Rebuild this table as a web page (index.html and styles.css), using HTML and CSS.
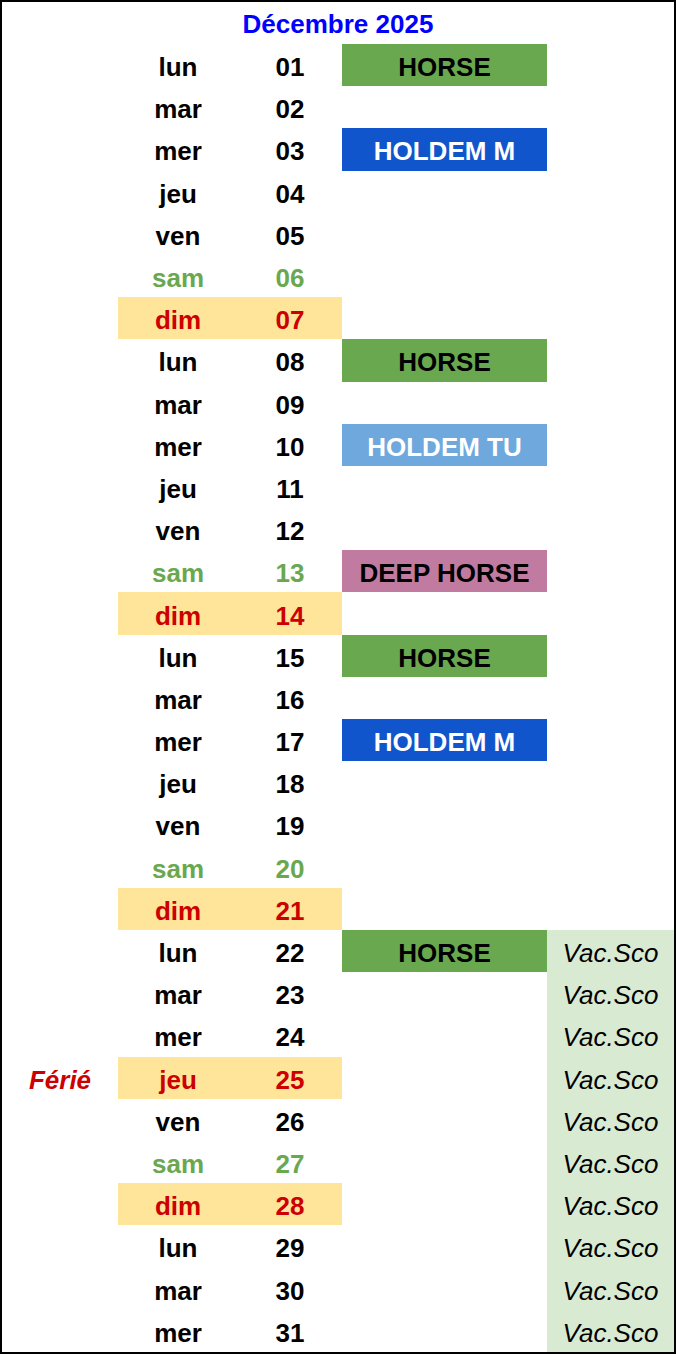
FILE: index.html
```html
<!DOCTYPE html>
<html lang="fr">
<head>
<meta charset="utf-8">
<title>Décembre 2025</title>
<link rel="stylesheet" href="styles.css">
</head>
<body>
<div class="sheet">
  <div class="title">Décembre 2025</div>
  <div class="rows">
    <div class="row"><div class="c1"></div><div class="c2">lun</div><div class="c3">01</div><div class="c4 ev horse">HORSE</div><div class="c5"></div></div>
    <div class="row"><div class="c1"></div><div class="c2">mar</div><div class="c3">02</div><div class="c4"></div><div class="c5"></div></div>
    <div class="row"><div class="c1"></div><div class="c2">mer</div><div class="c3">03</div><div class="c4 ev holdem-m">HOLDEM M</div><div class="c5"></div></div>
    <div class="row"><div class="c1"></div><div class="c2">jeu</div><div class="c3">04</div><div class="c4"></div><div class="c5"></div></div>
    <div class="row"><div class="c1"></div><div class="c2">ven</div><div class="c3">05</div><div class="c4"></div><div class="c5"></div></div>
    <div class="row sat"><div class="c1"></div><div class="c2">sam</div><div class="c3">06</div><div class="c4"></div><div class="c5"></div></div>
    <div class="row sun"><div class="c1"></div><div class="c2">dim</div><div class="c3">07</div><div class="c4"></div><div class="c5"></div></div>
    <div class="row"><div class="c1"></div><div class="c2">lun</div><div class="c3">08</div><div class="c4 ev horse">HORSE</div><div class="c5"></div></div>
    <div class="row"><div class="c1"></div><div class="c2">mar</div><div class="c3">09</div><div class="c4"></div><div class="c5"></div></div>
    <div class="row"><div class="c1"></div><div class="c2">mer</div><div class="c3">10</div><div class="c4 ev holdem-tu">HOLDEM TU</div><div class="c5"></div></div>
    <div class="row"><div class="c1"></div><div class="c2">jeu</div><div class="c3">11</div><div class="c4"></div><div class="c5"></div></div>
    <div class="row"><div class="c1"></div><div class="c2">ven</div><div class="c3">12</div><div class="c4"></div><div class="c5"></div></div>
    <div class="row sat"><div class="c1"></div><div class="c2">sam</div><div class="c3">13</div><div class="c4 ev deep">DEEP HORSE</div><div class="c5"></div></div>
    <div class="row sun"><div class="c1"></div><div class="c2">dim</div><div class="c3">14</div><div class="c4"></div><div class="c5"></div></div>
    <div class="row"><div class="c1"></div><div class="c2">lun</div><div class="c3">15</div><div class="c4 ev horse">HORSE</div><div class="c5"></div></div>
    <div class="row"><div class="c1"></div><div class="c2">mar</div><div class="c3">16</div><div class="c4"></div><div class="c5"></div></div>
    <div class="row"><div class="c1"></div><div class="c2">mer</div><div class="c3">17</div><div class="c4 ev holdem-m">HOLDEM M</div><div class="c5"></div></div>
    <div class="row"><div class="c1"></div><div class="c2">jeu</div><div class="c3">18</div><div class="c4"></div><div class="c5"></div></div>
    <div class="row"><div class="c1"></div><div class="c2">ven</div><div class="c3">19</div><div class="c4"></div><div class="c5"></div></div>
    <div class="row sat"><div class="c1"></div><div class="c2">sam</div><div class="c3">20</div><div class="c4"></div><div class="c5"></div></div>
    <div class="row sun"><div class="c1"></div><div class="c2">dim</div><div class="c3">21</div><div class="c4"></div><div class="c5"></div></div>
    <div class="row"><div class="c1"></div><div class="c2">lun</div><div class="c3">22</div><div class="c4 ev horse">HORSE</div><div class="c5 vac">Vac.Sco</div></div>
    <div class="row"><div class="c1"></div><div class="c2">mar</div><div class="c3">23</div><div class="c4"></div><div class="c5 vac">Vac.Sco</div></div>
    <div class="row"><div class="c1"></div><div class="c2">mer</div><div class="c3">24</div><div class="c4"></div><div class="c5 vac">Vac.Sco</div></div>
    <div class="row sun"><div class="c1 ferie">Férié</div><div class="c2">jeu</div><div class="c3">25</div><div class="c4"></div><div class="c5 vac">Vac.Sco</div></div>
    <div class="row"><div class="c1"></div><div class="c2">ven</div><div class="c3">26</div><div class="c4"></div><div class="c5 vac">Vac.Sco</div></div>
    <div class="row sat"><div class="c1"></div><div class="c2">sam</div><div class="c3">27</div><div class="c4"></div><div class="c5 vac">Vac.Sco</div></div>
    <div class="row sun"><div class="c1"></div><div class="c2">dim</div><div class="c3">28</div><div class="c4"></div><div class="c5 vac">Vac.Sco</div></div>
    <div class="row"><div class="c1"></div><div class="c2">lun</div><div class="c3">29</div><div class="c4"></div><div class="c5 vac">Vac.Sco</div></div>
    <div class="row"><div class="c1"></div><div class="c2">mar</div><div class="c3">30</div><div class="c4"></div><div class="c5 vac">Vac.Sco</div></div>
    <div class="row"><div class="c1"></div><div class="c2">mer</div><div class="c3">31</div><div class="c4"></div><div class="c5 vac">Vac.Sco</div></div>
  </div>
</div>
</body>
</html>
```

FILE: styles.css
```css
html, body {
  margin: 0;
  padding: 0;
  background: #ffffff;
}
.sheet {
  width: 676px;
  height: 1354px;
  box-sizing: border-box;
  border: 2px solid #000000;
  display: flex;
  flex-direction: column;
  font-family: "Liberation Sans", Arial, sans-serif;
  font-size: 26px;
  font-weight: bold;
  color: #000000;
}
.title {
  height: 42px;
  flex: 0 0 42px;
  display: flex;
  align-items: center;
  justify-content: center;
  color: #0000ff;
  padding-top: 2px;
  box-sizing: border-box;
}
.rows {
  flex: 1;
  display: flex;
  flex-direction: column;
}
.row {
  flex: 1;
  display: grid;
  grid-template-columns: 116px 120px 104px 205px 1fr;
}
.row > div {
  display: flex;
  align-items: center;
  justify-content: center;
  padding-top: 5px;
  box-sizing: border-box;
}
.sat .c2, .sat .c3 {
  color: #6aa84f;
}
.sun .c2, .sun .c3 {
  color: #cc0000;
  background: #ffe599;
}
.horse {
  background: #6aa84f;
  color: #000000;
}
.holdem-m {
  background: #1155cc;
  color: #ffffff;
}
.holdem-tu {
  background: #6fa8dc;
  color: #ffffff;
}
.deep {
  background: #c27ba0;
  color: #000000;
}
.vac {
  background: #d9ead3;
  font-weight: normal;
  font-style: italic;
}
.ferie {
  color: #cc0000;
  font-style: italic;
}
```
